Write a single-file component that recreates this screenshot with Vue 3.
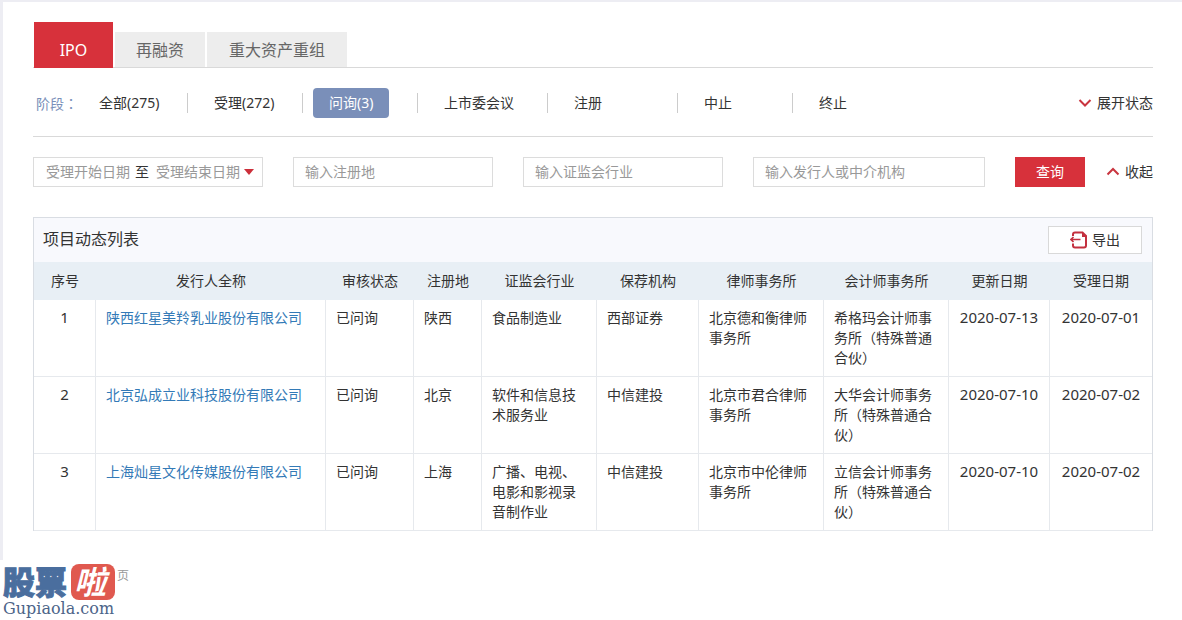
<script setup>
import { ref } from 'vue'

const tabs = ['IPO', '再融资', '重大资产重组']
const activeTab = ref(0)

const stages = [
  { label: '全部(275)' },
  { label: '受理(272)' },
  { label: '问询(3)' },
  { label: '上市委会议', wide: true },
  { label: '注册', wide: true },
  { label: '中止' },
  { label: '终止' }
]
const activeStage = ref(2)

const columns = [
  { title: '序号', cls: 'c-no' },
  { title: '发行人全称', cls: 'c-issuer' },
  { title: '审核状态', cls: 'c-status' },
  { title: '注册地', cls: 'c-place' },
  { title: '证监会行业', cls: 'c-industry' },
  { title: '保荐机构', cls: 'c-sponsor' },
  { title: '律师事务所', cls: 'c-firm' },
  { title: '会计师事务所', cls: 'c-firm' },
  { title: '更新日期', cls: 'c-updated' },
  { title: '受理日期', cls: 'c-accepted' }
]

const rows = [
  { issuer: '陕西红星美羚乳业股份有限公司', status: '已问询', place: '陕西', industry: '食品制造业', sponsor: '西部证券', law: '北京德和衡律师事务所', audit: '希格玛会计师事务所（特殊普通合伙）', updated: '2020-07-13', accepted: '2020-07-01' },
  { issuer: '北京弘成立业科技股份有限公司', status: '已问询', place: '北京', industry: '软件和信息技术服务业', sponsor: '中信建投', law: '北京市君合律师事务所', audit: '大华会计师事务所（特殊普通合伙）', updated: '2020-07-10', accepted: '2020-07-02' },
  { issuer: '上海灿星文化传媒股份有限公司', status: '已问询', place: '上海', industry: '广播、电视、电影和影视录音制作业', sponsor: '中信建投', law: '北京市中伦律师事务所', audit: '立信会计师事务所（特殊普通合伙）', updated: '2020-07-10', accepted: '2020-07-02' }
]
</script>

<template>
  <div class="page">
    <main class="content">
      <nav class="tabs" aria-label="业务类型">
        <button
          v-for="(tab, i) in tabs"
          :key="tab"
          type="button"
          class="tab"
          :class="{ active: i === activeTab }"
          @click="activeTab = i"
        >{{ tab }}</button>
      </nav>

      <section class="stages">
        <span class="stage-label">阶段<span class="colon">：</span></span>
        <ul class="stage-list">
          <li v-for="(s, i) in stages" :key="s.label" :class="{ wide: s.wide }">
            <button type="button" class="stage" :class="{ active: i === activeStage }" @click="activeStage = i">{{ s.label }}</button>
          </li>
        </ul>
        <button type="button" class="toggle">
          <svg width="14" height="10" viewBox="0 0 14 10" aria-hidden="true"><path d="M1.5 2 L7 7.5 L12.5 2" /></svg>
          展开状态
        </button>
      </section>

      <form class="filters" @submit.prevent>
        <div class="dates">
          <input type="text" placeholder="受理开始日期" aria-label="受理开始日期" />
          <span class="to">至</span>
          <input type="text" placeholder="受理结束日期" aria-label="受理结束日期" />
          <i class="caret"></i>
        </div>
        <input class="field" type="text" placeholder="输入注册地" aria-label="注册地" />
        <input class="field" type="text" placeholder="输入证监会行业" aria-label="证监会行业" />
        <input class="field" type="text" placeholder="输入发行人或中介机构" aria-label="发行人或中介机构" />
        <div class="actions">
          <button type="submit" class="search">查询</button>
          <button type="button" class="toggle">
            <svg width="14" height="10" viewBox="0 0 14 10" aria-hidden="true"><path d="M1.5 7.5 L7 2 L12.5 7.5" /></svg>
            收起
          </button>
        </div>
      </form>

      <section class="panel">
        <header class="panel-head">
          <h2>项目动态列表</h2>
          <button type="button" class="export">
            <svg width="18" height="18" viewBox="0 0 18 18" aria-hidden="true">
              <path d="M3 5 V3.5 Q3 1.5 5 1.5 H12.5 L16 5 V14.5 Q16 16.5 14 16.5 H5 Q3 16.5 3 14.5 V12.5" />
              <path class="solid" d="M12 1 L17 6 H12 Z" />
              <path class="thin" d="M10.5 8.5 H1 M3.5 6 L1 8.5 L3.5 11" />
            </svg>
            导出
          </button>
        </header>
        <table>
          <thead>
            <tr><th v-for="c in columns" :key="c.title" :class="c.cls" scope="col">{{ c.title }}</th></tr>
          </thead>
          <tbody>
            <tr v-for="(r, i) in rows" :key="r.issuer">
              <td class="num">{{ i + 1 }}</td>
              <td><a href="#">{{ r.issuer }}</a></td>
              <td>{{ r.status }}</td>
              <td>{{ r.place }}</td>
              <td>{{ r.industry }}</td>
              <td>{{ r.sponsor }}</td>
              <td>{{ r.law }}</td>
              <td>{{ r.audit }}</td>
              <td class="num">{{ r.updated }}</td>
              <td class="num">{{ r.accepted }}</td>
            </tr>
          </tbody>
        </table>
      </section>
    </main>

    <footer class="foot">
      <div class="logo">
        <div class="mark"><span class="word">股票</span><span class="seal">啦</span></div>
        <div class="domain">Gupiaola.com</div>
      </div>
      <span class="pager">页</span>
    </footer>
  </div>
</template>

<style>
body {
  background: #fff;
}
</style>

<style scoped>
.page {
  font: 14px/20px "Noto Sans", "Noto Sans CJK SC", sans-serif;
  color: #333;
  border-top: 2px solid #ededf3;
}
button,
input {
  font: inherit;
  color: inherit;
  margin: 0;
  padding: 0;
  border: 0;
  background: none;
  border-radius: 0;
  box-sizing: border-box;
}
button {
  cursor: pointer;
  white-space: nowrap;
}
.content {
  border-left: 3px solid #ededf3;
  padding: 20px 29px 29px 30px;
}
.tabs {
  display: flex;
  align-items: flex-end;
  gap: 2px;
  padding-left: 1px;
  border-bottom: 1px solid #d9d9d9;
}
.tab {
  height: 35px;
  padding: 0 21px;
  background: #ededed;
  color: #666;
  font-size: 16px;
}
.tab:last-child {
  padding: 0 22px;
}
.tab.active {
  height: 46px;
  min-width: 79px;
  margin-bottom: -1px;
  padding: 10px 25px 0;
  background: #d7313b;
  color: #fff;
}
.stages {
  display: flex;
  align-items: center;
  padding: 20px 0 18px;
  border-bottom: 1px solid #d9d9d9;
}
.stage-label {
  box-sizing: border-box;
  width: 40px;
  padding-left: 3px;
  color: #7a8fb9;
  white-space: nowrap;
}
.colon {
  font-family: "Noto Sans CJK TC", sans-serif;
}
.stage-list {
  display: flex;
  flex: 1;
  margin: 0;
  padding: 0;
  list-style: none;
}
.stage-list li {
  display: flex;
  align-items: center;
  width: 115px;
}
.stage-list li.wide {
  width: 130px;
}
.stage-list li:not(:last-child)::after {
  content: "";
  width: 1px;
  height: 20px;
  margin-left: auto;
  background: #ccc;
}
.stage {
  height: 30px;
  margin-left: 10px;
  padding: 0 16px;
  border-radius: 4px;
}
.stage.active {
  background: #7a8fb9;
  color: #fff;
}
.toggle {
  display: flex;
  align-items: center;
  gap: 5px;
}
.toggle path {
  fill: none;
  stroke: #c9353f;
  stroke-width: 2;
}
.filters {
  display: grid;
  grid-template-columns: 230px 200fr 200fr 232fr 138px;
  gap: 30px;
  padding: 20px 0 30px;
}
.dates,
.field {
  height: 30px;
  border: 1px solid #dcdcdc;
}
.field {
  width: 100%;
  padding: 0 11px 2px;
}
.dates {
  display: flex;
  align-items: center;
  box-sizing: border-box;
  padding-left: 12px;
}
.dates input {
  width: 84px;
}
.to {
  margin: 0 7px 0 5px;
}
.caret {
  margin-left: 4px;
  border: 5px solid transparent;
  border-top: 6px solid #cc2f3a;
  border-bottom: 0;
}
input::placeholder {
  color: #999;
  opacity: 1;
}
.actions {
  display: flex;
  justify-content: space-between;
}
.search {
  width: 70px;
  height: 30px;
  background: #d7313b;
  color: #fff;
}
.panel {
  border: 1px solid #d9dde3;
  border-bottom: 0;
}
.panel-head {
  display: flex;
  align-items: center;
  justify-content: space-between;
  height: 44px;
  padding: 0 10px 0 9px;
  background: #f8f9fd;
}
h2 {
  margin: 0;
  padding-bottom: 2px;
  font-size: 16px;
  font-weight: 400;
}
.export {
  display: flex;
  align-items: center;
  justify-content: center;
  gap: 4px;
  width: 94px;
  height: 28px;
  border: 1px solid #d9d9d9;
  background: #fff;
}
.export path {
  fill: none;
  stroke: #c3303f;
  stroke-width: 2;
}
.export .solid {
  fill: #c3303f;
  stroke: none;
}
.export .thin {
  stroke-width: 1.6;
}
table {
  width: 100%;
  table-layout: fixed;
  border-collapse: separate;
  border-spacing: 0;
}
th {
  height: 38px;
  padding: 0;
  background: #e8eff5;
  font-weight: 400;
  text-align: center;
}
td {
  padding: 8px 10px;
  border-right: 1px solid #e6e9ed;
  border-bottom: 1px solid #e6e9ed;
  vertical-align: top;
}
td:last-child {
  border-right: 0;
}
td.num {
  padding: 7px 0 9px;
  font-size: 15px;
  text-align: center;
}
td a {
  color: #337ab7;
  text-decoration: none;
  white-space: nowrap;
}
.c-no { width: 62px; }
.c-issuer { width: 230px; }
.c-status { width: 88px; }
.c-place { width: 68px; }
.c-industry { width: 115px; }
.c-sponsor { width: 102px; }
.c-firm { width: 125px; }
.c-updated { width: 101px; }
.c-accepted { width: 102px; }
.foot {
  display: flex;
  align-items: flex-start;
  gap: 2px;
  padding: 4px 0 0 3px;
}
.mark {
  display: flex;
  align-items: flex-start;
  gap: 4px;
  height: 36px;
}
.word {
  font: 900 32px/32px "Noto Sans CJK SC", sans-serif;
  color: #4a6e9e;
  -webkit-text-stroke: 1px #4a6e9e;
}
.seal {
  box-sizing: border-box;
  width: 44px;
  height: 36px;
  padding-right: 6px;
  border-radius: 8px;
  background: #e0594f;
  color: #fff;
  font: italic 700 32px/32px "Noto Sans CJK SC", sans-serif;
  text-align: center;
}
.domain {
  font: 16px/18px "DejaVu Serif", serif;
  color: #4c6488;
}
.pager {
  padding-top: 2px;
  font-size: 12px;
  color: #999;
}
</style>
